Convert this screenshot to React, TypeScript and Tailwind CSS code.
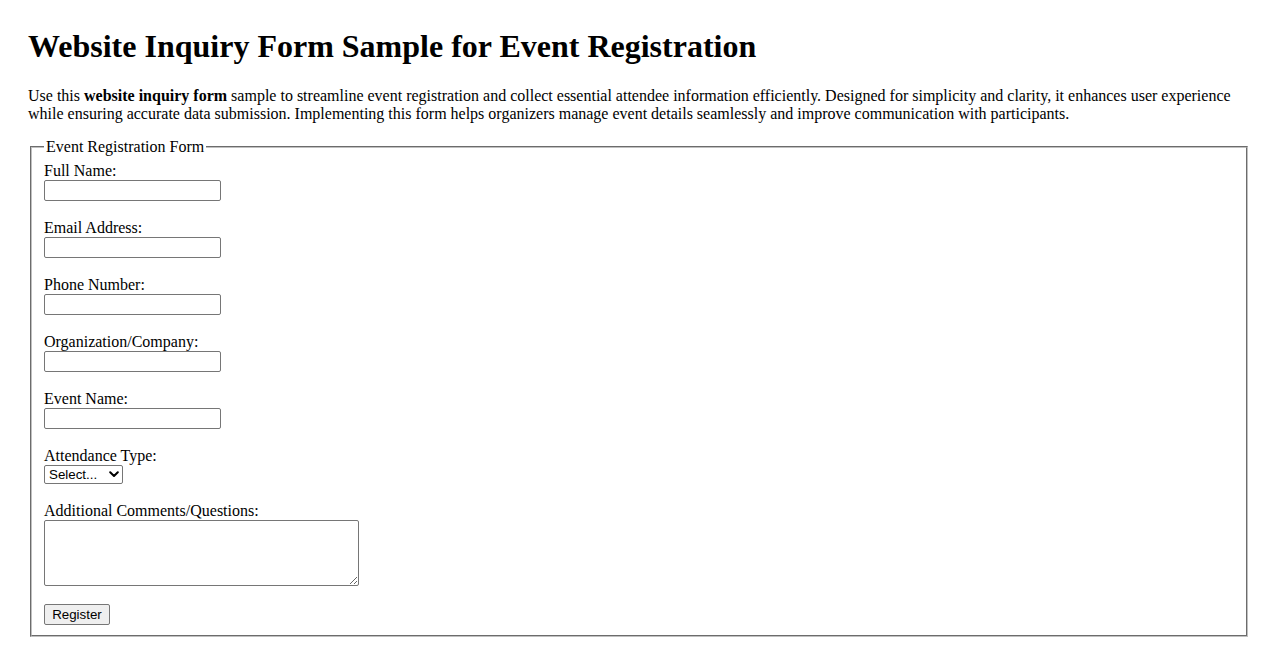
import React from "react";

const fields = [
  { id: "fullName", label: "Full Name:", type: "text" },
  { id: "email", label: "Email Address:", type: "email" },
  { id: "phone", label: "Phone Number:", type: "tel" },
  { id: "org", label: "Organization/Company:", type: "text" },
  { id: "eventName", label: "Event Name:", type: "text" },
];

const controlFont = "font-['Liberation_Sans',Arial,sans-serif] text-[13.333px] text-black";

export default function App() {
  return (
    <div className="min-h-screen bg-white px-[28px] pt-[28px] font-['Liberation_Serif','Times_New_Roman',serif] text-[16px] text-black">
      <h1 className="text-[32px] font-bold leading-[36.8px]">Website Inquiry Form Sample for Event Registration</h1>
      <p className="mt-[22.4px] mb-[15px] leading-[18px]">
        Use this <strong>website inquiry form</strong> sample to streamline event registration and collect essential attendee
        information efficiently. Designed for simplicity and clarity, it enhances user experience while ensuring accurate data
        submission. Implementing this form helps organizers manage event details seamlessly and improve communication with
        participants.
      </p>

      <form onSubmit={e => e.preventDefault()}>
        <fieldset className="mx-[2px] border-2 border-[#c0c0c0] [border-style:groove] px-[12px] pt-[4.6px] pb-[10px]">
          <legend className="px-[2px] leading-[18.4px]">Event Registration Form</legend>

          {fields.map(f => (
            <div key={f.id} className="mb-[17px]">
              <label htmlFor={f.id} className="block leading-[19px]">{f.label}</label>
              <input
                id={f.id}
                type={f.type}
                className={`block h-[21px] w-[177px] rounded-[2px] border border-[#767676] bg-white px-[2px] ${controlFont}`}
              />
            </div>
          ))}

          <div className="mb-[17px]">
            <label htmlFor="attendance" className="block leading-[19px]">Attendance Type:</label>
            <div className="relative w-[79px]">
              <select
                id="attendance"
                defaultValue=""
                className={`block h-[19px] w-[79px] appearance-none rounded-[2px] border border-[#767676] bg-white pl-[4px] leading-[17px] ${controlFont}`}
              >
                <option value="">Select...</option>
                <option value="in-person">In-Person</option>
                <option value="virtual">Virtual</option>
              </select>
              <svg
                className="pointer-events-none absolute right-[4px] top-[6px]"
                width="10"
                height="7"
                viewBox="0 0 10 7"
                fill="none"
              >
                <polyline points="1.2,1.2 5,5 8.8,1.2" stroke="#000" strokeWidth="2" strokeLinecap="round" strokeLinejoin="round" />
              </svg>
            </div>
          </div>

          <div className="mb-[18px]">
            <label htmlFor="comments" className="block leading-[19px]">Additional Comments/Questions:</label>
            <textarea
              id="comments"
              className={`block h-[66px] w-[315px] resize rounded-[2px] border border-[#767676] bg-white p-[2px] ${controlFont}`}
            />
          </div>

          <button
            type="submit"
            className={`block h-[21px] w-[66px] rounded-[2px] border border-[#767676] bg-[#efefef] px-[6px] ${controlFont}`}
          >
            Register
          </button>
        </fieldset>
      </form>
    </div>
  );
}
